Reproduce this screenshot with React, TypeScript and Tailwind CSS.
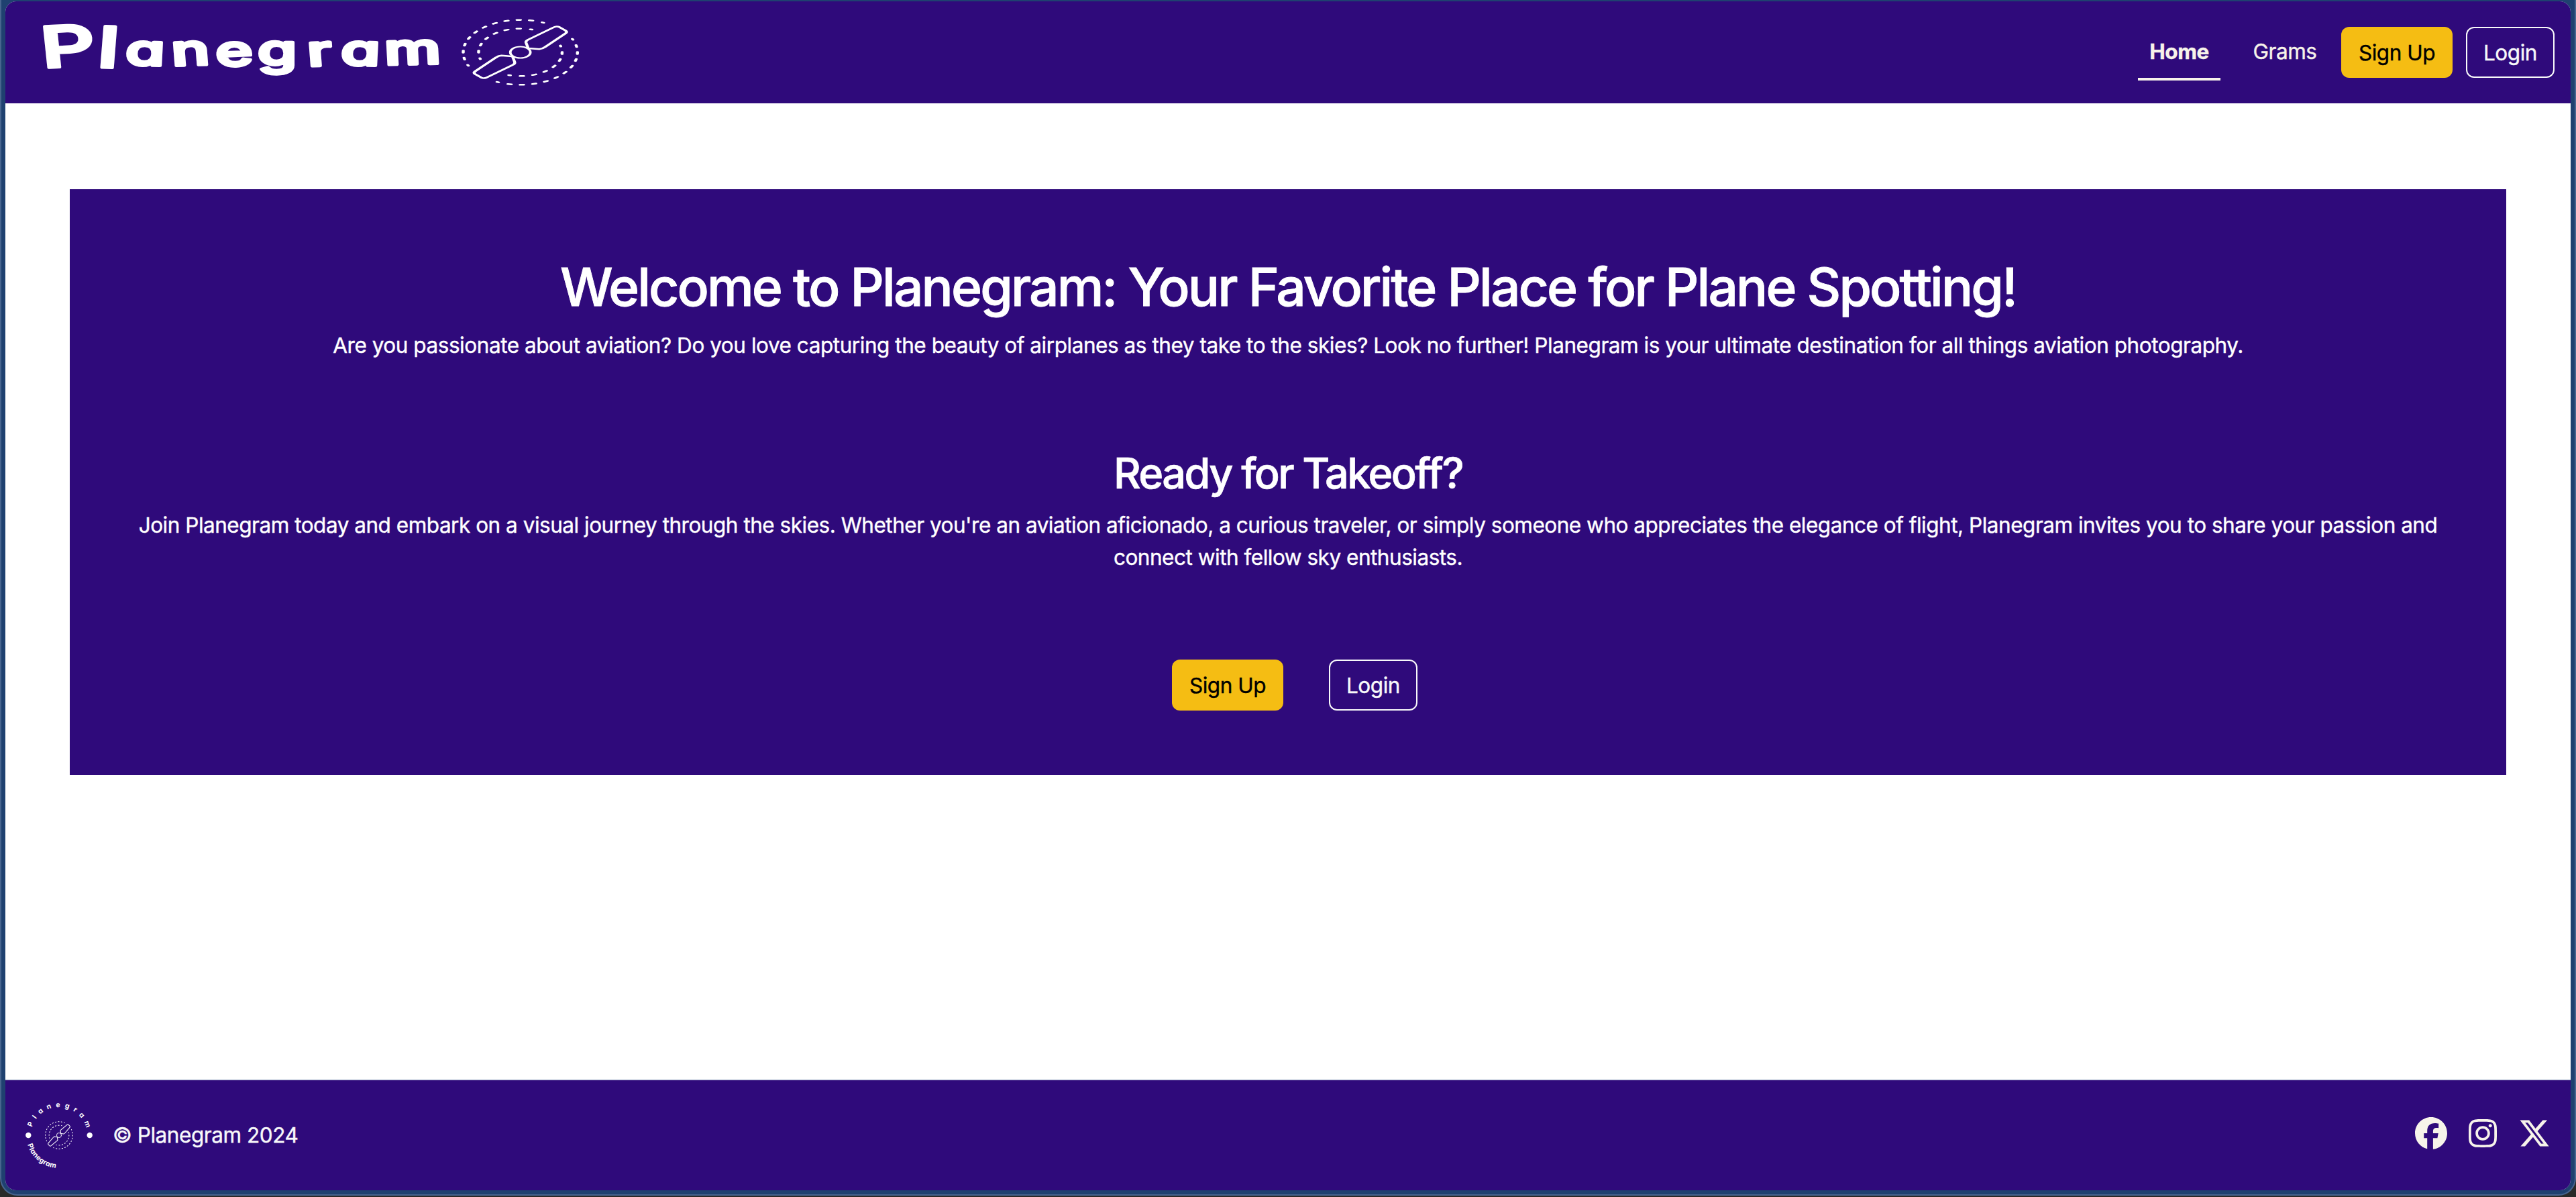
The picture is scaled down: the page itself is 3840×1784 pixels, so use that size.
import React from "react";
import { FaFacebook, FaInstagram, FaXTwitter } from "react-icons/fa6";

const arc = (from: number, step: number, count: number) =>
  Array.from({ length: count }, (_, i) => from - i * step);
const OUTER = arc(23.3, 12.45, 12);
const INNER = arc(15, 17.2, 8);

function Dashes({ angles, radius, half }: { angles: number[]; radius: number; half: number }) {
  return (
    <>
      {angles.map((a, i) => {
        const h = i === 0 || i === angles.length - 1 ? half * 0.5 : half;
        return (
          <path key={a} d={`M${-h} ${-radius} H${h}`} transform={`rotate(${a})`} />
        );
      })}
    </>
  );
}

function HalfPropeller() {
  return (
    <>
      <Dashes angles={OUTER} radius={145} half={4.5} />
      <Dashes angles={INNER} radius={106} half={4.5} />
      <path d="M20 -18 L14.500 -43 Q13 -51 19 -56 L85 -112 Q92 -118.500 99 -113 L115 -97 Q120 -91 115 -85 L62 -23 Q56 -15 48 -14 L27 -17.500 Z" />
    </>
  );
}

function Propeller() {
  return (
    <g fill="none" stroke="white" strokeWidth="7.500" strokeLinecap="round" strokeLinejoin="round">
      <HalfPropeller />
      <g transform="rotate(180)">
        <HalfPropeller />
      </g>
      <circle r="25.500" strokeWidth="6.500" />
    </g>
  );
}

const BRUSH = "font-['Inter',sans-serif] [font-feature-settings:'cv11']";

function Wordmark() {
  return (
    <svg viewBox="40 2 840 152" className="block h-[152px] w-[840px]">
      <g transform="scale(1.5 1)">
        <text
          fontSize="63"
          fontWeight="500"
          textAnchor="middle"
          fill="white"
          stroke="white"
          strokeWidth="4.500"
          strokeLinejoin="round"
          strokeLinecap="round"
          letterSpacing="0"
          className={BRUSH}
        >
          <tspan fontSize="84" y="101 100" x="69.500 106.500" rotate="-4 3">Pl</tspan>
          <tspan
            y="96.500 98 99 97.500 98.500 96.500 96.500"
            x="143.700 190.300 233.700 275.500 318.600 357.700 410.700"
            rotate="2 -3 -3 0 -3 2 -2"
          >
            anegram
          </tspan>
        </text>
      </g>
      <g transform="translate(775.670 78) scale(0.587 0.3333)">
        <Propeller />
      </g>
    </svg>
  );
}

function RoundLogo() {
  return (
    <svg viewBox="-50 -50 100 100" className="h-[100px] w-[100px] overflow-visible">
      <path id="seal-top" d="M-42 0 A42 42 0 0 1 42 0" fill="none" />
      <path id="seal-bottom" d="M-49 0 A49 49 0 0 0 0 49" fill="none" />
      <g fill="white" fontWeight="700" letterSpacing="0" className={BRUSH}>
        <text fontSize="10.500">
          <textPath href="#seal-top" startOffset="12" textLength="109">Planegram</textPath>
        </text>
        <text fontSize="10.500">
          <textPath href="#seal-bottom" startOffset="14" textLength="58">Planegram</textPath>
        </text>
      </g>
      <circle cx="-45.700" r="4.200" fill="white" />
      <circle cx="45.700" r="4.200" fill="white" />
      <g transform="scale(0.140)">
        <Propeller />
      </g>
    </svg>
  );
}

function SignUp() {
  return (
    <button className="flex h-[76px] w-[166px] items-center justify-center whitespace-nowrap rounded-xl bg-[#f5bd13] pt-0.5 text-black">
      Sign Up
    </button>
  );
}

function Login() {
  return (
    <button className="flex h-[76px] w-[132px] items-center justify-center rounded-xl border-2 border-[#f8f9fa] pt-0.5 text-[#f8f9fa]">
      Login
    </button>
  );
}

export default function App() {
  return (
    <div className="h-[1784px] w-[3840px] bg-[#2a2a29] font-['Inter',sans-serif] text-[31.5px] leading-[48px] tracking-[-0.45px] [-webkit-text-stroke:0.4px_currentColor]">
      <div className="h-[1782px] rounded-b-[26px] border-x-2 border-b-2 border-[#48658f] bg-[#1f4170] px-1.5 pb-1.5 pt-0.5">
        <div className="flex h-[1772px] flex-col overflow-hidden rounded-2xl bg-white">
          <header className="flex h-[152px] shrink-0 items-center justify-between bg-[#2f0a7b] pl-8 pr-6">
            <Wordmark />
            <nav className="mt-1 flex items-start text-[#f7f3ea]">
              <a className="flex h-20 w-[123px] items-center justify-center border-b-4 border-[#f7f3ea] pb-[3px] font-bold">
                Home
              </a>
              <a className="ml-12 mr-9 flex h-[76px] w-24 items-center justify-center pb-[3px]">Grams</a>
              <SignUp />
              <div className="w-5" />
              <Login />
            </nav>
          </header>

          <main className="grow px-24 pt-32">
            <section className="flex h-[873px] flex-col items-center bg-[#2f0a7b] px-24 pt-[98px] text-center text-white">
              <h1 className="mb-[15px] whitespace-nowrap text-[78.5px] font-medium leading-[96px] tracking-[-2.9px] [-webkit-text-stroke:0.9px_white]">
                Welcome to Planegram: Your Favorite Place for Plane Spotting!
              </h1>
              <p className="whitespace-nowrap">
                Are you passionate about aviation? Do you love capturing the beauty of airplanes as they take to the skies? Look no further! Planegram is your ultimate destination for all things aviation photography.
              </p>
              <h2 className="mb-[15px] mt-32 whitespace-nowrap text-[63px] font-medium leading-[77px] tracking-[-2.6px] [-webkit-text-stroke:0.7px_white]">
                Ready for Takeoff?
              </h2>
              <p className="whitespace-nowrap tracking-[-0.48px]">
                Join Planegram today and embark on a visual journey through the skies. Whether you're an aviation aficionado, a curious traveler, or simply someone who appreciates the elegance of flight, Planegram invites you to share your passion and
                <br />
                connect with fellow sky enthusiasts.
              </p>
              <div className="ml-5 mt-32 flex gap-[68px]">
                <SignUp />
                <Login />
              </div>
            </section>
          </main>

          <footer className="flex h-[166px] shrink-0 items-center justify-between border-t-2 border-[#d9dfe9] bg-[#2f0a7b] pl-[30px] pr-[30px]">
            <div className="flex items-center gap-[30px]">
              <RoundLogo />
              <span className="text-[#f8f9fa]">© Planegram 2024</span>
            </div>
            <div className="mb-1.5 flex items-center gap-8 text-[#f7f3ea]">
              <FaFacebook className="size-12" />
              <FaInstagram className="h-12 w-[42px]" />
              <FaXTwitter className="size-12" />
            </div>
          </footer>
        </div>
      </div>
    </div>
  );
}
